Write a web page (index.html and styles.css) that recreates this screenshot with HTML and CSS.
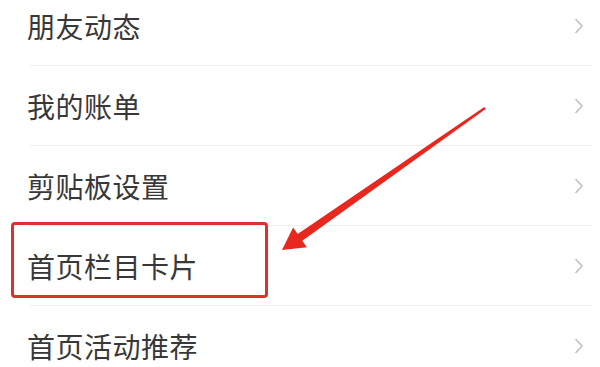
FILE: index.html
```html
<!DOCTYPE html>
<html lang="zh-CN">
<head>
    <meta charset="UTF-8">
    <meta name="viewport" content="width=device-width, initial-scale=1.0">
    <title>设置</title>
    <link rel="stylesheet" href="styles.css">
</head>
<body>
    <div class="page">
        <ul class="menu">
            <li class="menu-item">
                <span class="label">朋友动态</span>
                <svg class="chevron" viewBox="0 0 10 16"><polyline points="1.5,1 8,8 1.5,15"/></svg>
            </li>
            <li class="menu-item">
                <span class="label">我的账单</span>
                <svg class="chevron" viewBox="0 0 10 16"><polyline points="1.5,1 8,8 1.5,15"/></svg>
            </li>
            <li class="menu-item">
                <span class="label">剪贴板设置</span>
                <svg class="chevron" viewBox="0 0 10 16"><polyline points="1.5,1 8,8 1.5,15"/></svg>
            </li>
            <li class="menu-item">
                <span class="label">首页栏目卡片</span>
                <svg class="chevron" viewBox="0 0 10 16"><polyline points="1.5,1 8,8 1.5,15"/></svg>
                <!-- 标注框 -->
                <span class="mark-box"></span>
            </li>
            <li class="menu-item">
                <span class="label">首页活动推荐</span>
                <svg class="chevron" viewBox="0 0 10 16"><polyline points="1.5,1 8,8 1.5,15"/></svg>
            </li>
        </ul>

        <!-- 标注箭头 -->
        <svg class="arrow" viewBox="0 0 600 367" width="600" height="367">
            <polygon points="484.3,107 297.7,234.1 293.1,227.6 282,250 306.9,247.2 302.3,240.7 485.7,109"/>
        </svg>
    </div>
</body>
</html>
```

FILE: styles.css
```css
body {
    margin: 0;
    background: #fff;
    font-family: "Noto Sans CJK SC", "Noto Sans", sans-serif;
    color: #333;
    overflow: hidden;
}

.page {
    position: relative;
    width: 600px;
    height: 367px;
    overflow: hidden;
}

.menu {
    list-style: none;
    margin: -14px 0 0 0;
    padding: 0;
}

.menu-item {
    position: relative;
    display: flex;
    align-items: center;
    justify-content: space-between;
    height: 80px;
    padding: 0 16px 0 27px;
}

/* séparateur décalé à gauche */
.menu-item::after {
    content: "";
    position: absolute;
    left: 30px;
    right: 8px;
    bottom: 0;
    height: 1px;
    background: #eeeeee;
}

.label {
    font-size: 28px;
    line-height: 1;
    letter-spacing: 0.5px;
    color: #383838;
}

.chevron {
    width: 10px;
    height: 16px;
    fill: none;
    stroke: #c2c2c2;
    stroke-width: 1.6;
}

.mark-box {
    position: absolute;
    left: 11px;
    top: -4px;
    width: 251px;
    height: 70px;
    border: 3px solid #d9342b;
    border-radius: 4px;
}

.arrow {
    position: absolute;
    left: 0;
    top: 0;
    pointer-events: none;
}

.arrow polygon {
    fill: #e8271f;
}
```
